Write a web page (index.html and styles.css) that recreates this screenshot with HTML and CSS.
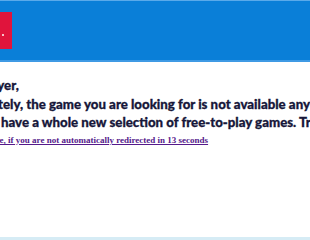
FILE: index.html
```html
<!DOCTYPE html>
<html lang="en">
<head>
  <meta charset="UTF-8" />
  <title>Game not available</title>
  <link rel="stylesheet" href="styles.css">
</head>
<body>

  <div class="header">
    <div class="logo"><span class="dot"></span></div>
  </div>

  <div class="message">
    <p class="greeting">Dear player,</p>
    <p class="text">Unfortunately, the game you are looking for is not available anymore.</p>
    <p class="text offer">But we have a whole new selection of free-to-play games. Try them out!</p>
    <a class="redirect" href="#">Click here, if you are not automatically redirected in 13 seconds</a>
  </div>

  <div class="footer"></div>

</body>
</html>
```

FILE: styles.css
```css
html, body {
  margin: 0;
  padding: 0;
  height: 100%;
  overflow: hidden;
  background: #fff;
}

body {
  display: flex;
  flex-direction: column;
}

.header {
  height: 59px;
  background: #0a7fd8;
  border-top: 1px solid #5aaaea;
  border-bottom: 2px solid #3f9ae4;
  display: flex;
  align-items: center;
}

.logo {
  width: 12px;
  height: 37px;
  background: #e0143c;
  position: relative;
}

.logo .dot {
  position: absolute;
  left: 2px;
  top: 22px;
  width: 2px;
  height: 2px;
  background: #f8c0c8;
}

.message {
  flex: 1;
  margin-left: -63px;
  padding-top: 14px;
  font-family: Lato, sans-serif;
  font-weight: 900;
  font-size: 13.25px;
  color: #17173a;
  -webkit-text-stroke: 0.3px #17173a;
  white-space: nowrap;
}

.message p {
  margin: 0;
  line-height: 18px;
}

.message .greeting {
  margin-bottom: 1px;
  margin-left: 11px;
}

.message .offer {
  margin-left: 19px;
}

.redirect {
  display: block;
  margin-left: 27px;
  line-height: 19px;
  font-family: "Liberation Serif", serif;
  font-weight: bold;
  font-size: 9px;
  color: #551a8b;
  -webkit-text-stroke: 0;
}

.footer {
  height: 3px;
  background: #d6ecf5;
}
```
